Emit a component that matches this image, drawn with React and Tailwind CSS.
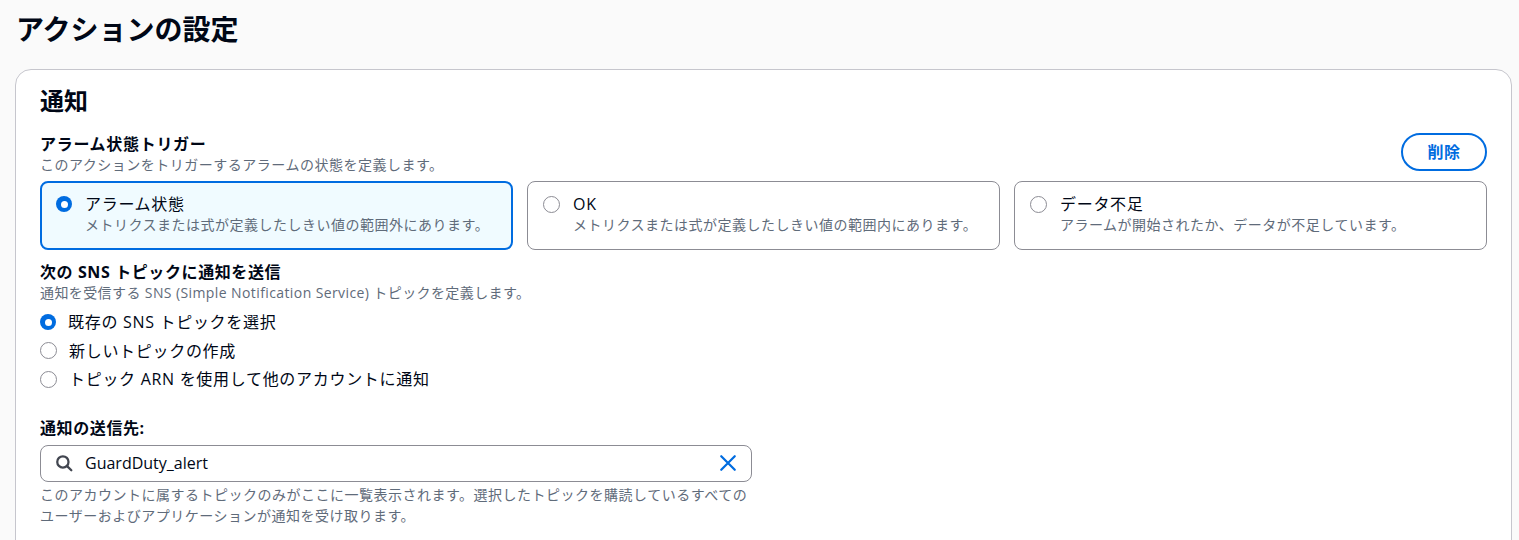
import React, { useState } from 'react';

const font = { fontFamily: '"Open Sans", "Noto Sans CJK JP", sans-serif' };

const Radio = ({ checked }) => (
  checked ? (
    <span className="flex w-[16px] h-[16px] rounded-full bg-[#006ce0] items-center justify-center shrink-0">
      <span className="block w-[7px] h-[7px] rounded-full bg-white"></span>
    </span>
  ) : (
    <span className="block w-[17px] h-[17px] rounded-full border-[1.5px] border-[#8c8c94] bg-white shrink-0"></span>
  )
);

const tiles = [
  { key: 'alarm', label: 'アラーム状態', desc: 'メトリクスまたは式が定義したしきい値の範囲外にあります。' },
  { key: 'ok', label: 'OK', desc: 'メトリクスまたは式が定義したしきい値の範囲内にあります。' },
  { key: 'insufficient', label: 'データ不足', desc: 'アラームが開始されたか、データが不足しています。' },
];

const topicOptions = [
  '既存の SNS トピックを選択',
  '新しいトピックの作成',
  'トピック ARN を使用して他のアカウントに通知',
];

const App = () => {
  const [state, setState] = useState('alarm');
  const [topic, setTopic] = useState(0);

  return (
    <div className="min-h-[540px] bg-[#fafafa] text-[#000716]" style={font}>
      <div className="px-4 pt-[11px]">
        <h1 className="text-[28px] leading-[36px] font-bold">アクションの設定</h1>
      </div>
      <div className="mt-[22px] ml-[15px] mr-[7px] bg-white border border-[#c6c6cd] rounded-[16px] px-6 pt-[16px] pb-6 h-[520px]">
        <h2 className="text-[24px] leading-[30px] font-bold">通知</h2>

        <div className="mt-[17px] flex items-start justify-between">
          <div>
            <div className="text-[16px] leading-[22px] font-bold tracking-[0.7px]">アラーム状態トリガー</div>
            <div className="text-[14px] leading-[20px] text-[#5f6b7a] tracking-[0.5px]">このアクションをトリガーするアラームの状態を定義します。</div>
          </div>
          <button className="w-[86px] h-[38px] rounded-full border-2 border-[#006ce0] text-[#006ce0] text-[16px] font-bold tracking-[0.5px]">
            削除
          </button>
        </div>

        <div className="mt-[6px] grid grid-cols-3 gap-[14px]">
          {tiles.map(t => {
            const sel = state === t.key;
            return (
              <div
                key={t.key}
                onClick={() => setState(t.key)}
                className={sel
                  ? 'h-[69px] rounded-[8px] border-2 border-[#006ce0] bg-[#f0fbff] pl-[14px] pt-[10px] flex gap-[13px] cursor-pointer'
                  : 'h-[69px] rounded-[8px] border border-[#8c8c94] bg-white pl-[15px] pt-[11px] flex gap-[13px] cursor-pointer'}
              >
                <div className="h-[22px] flex items-center"><Radio checked={sel} /></div>
                <div>
                  <div className="text-[16px] leading-[22px] tracking-[0.7px]">{t.label}</div>
                  <div className="text-[14px] leading-[20px] text-[#5f6b7a] tracking-[0.5px]">{t.desc}</div>
                </div>
              </div>
            );
          })}
        </div>

        <div className="mt-[11px]">
          <div className="text-[16px] leading-[22px] font-bold tracking-[0.6px]">次の SNS トピックに通知を送信</div>
          <div className="text-[14px] leading-[20px] text-[#5f6b7a] tracking-[0.4px]">通知を受信する SNS (Simple Notification Service) トピックを定義します。</div>
        </div>
        <div className="mt-[5px] flex flex-col">
          {topicOptions.map((o, i) => (
            <div key={i} onClick={() => setTopic(i)} className="h-[28.5px] flex items-center gap-[12px] cursor-pointer">
              <Radio checked={topic === i} />
              <span className="text-[16px] leading-[22px] tracking-[0.7px]">{o}</span>
            </div>
          ))}
        </div>

        <div className="mt-[23px] text-[16px] leading-[22px] font-bold tracking-[0.6px]">通知の送信先:</div>
        <div className="mt-[6px] w-[712px] h-[37px] rounded-[8px] border border-[#8c8c94] flex items-center pl-[14px] pr-[14px]">
          <svg width="18" height="18" viewBox="0 0 16 16" fill="none" stroke="#424650" strokeWidth="2" strokeLinecap="round">
            <circle cx="7" cy="7" r="5" />
            <path d="M11 11l3.5 3.5" />
          </svg>
          <span className="ml-[12px] text-[16px] flex-1">GuardDuty_alert</span>
          <svg width="18" height="18" viewBox="0 0 16 16" fill="none" stroke="#006ce0" strokeWidth="2" strokeLinecap="round">
            <path d="M2 2l12 12M14 2L2 14" />
          </svg>
        </div>
        <div className="mt-[2px] w-[712px] text-[14px] leading-[21px] text-[#5f6b7a] tracking-[0.5px]">
          このアカウントに属するトピックのみがここに一覧表示されます。選択したトピックを購読しているすべての<br />ユーザーおよびアプリケーションが通知を受け取ります。
        </div>
      </div>
    </div>
  );
};

export default App;
